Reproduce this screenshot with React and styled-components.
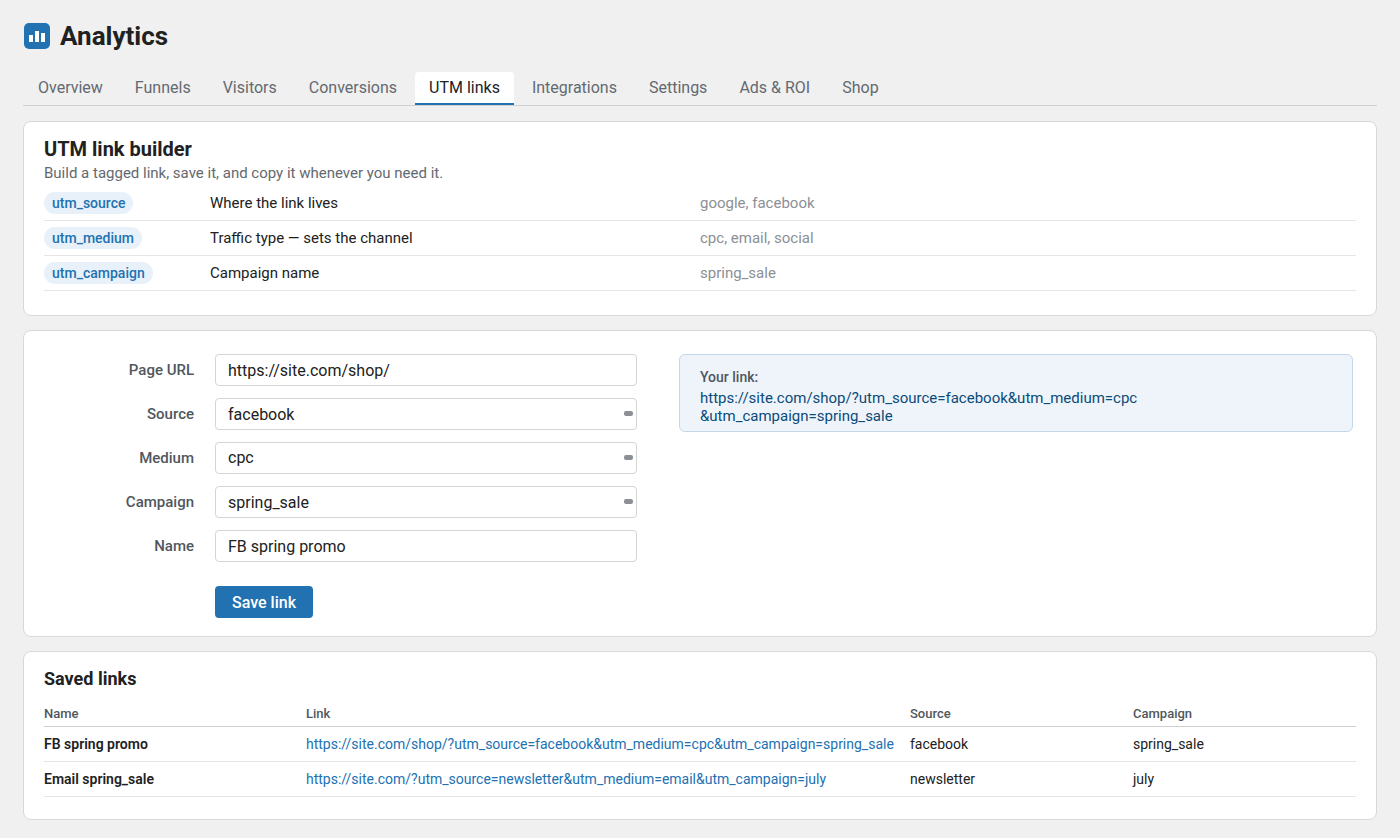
import React from "react";
import styled, { createGlobalStyle } from "styled-components";

const G = createGlobalStyle`
  body { margin:0; background:#f0f0f0; font-family: Roboto, "Liberation Sans", sans-serif; color:#212121; }
`;
const Page = styled.div`padding:20px 23px 24px 23px;`;
const Header = styled.div`display:flex;align-items:center;gap:10px;height:32px;margin-left:1px;`;
const Logo = styled.div`width:26px;height:26px;border-radius:5px;background:#2271b1;display:flex;align-items:flex-end;justify-content:center;gap:2px;padding-bottom:7px;box-sizing:border-box;`;
const Bar = styled.span`width:4px;height:${p=>p.h}px;background:#fff;`;
const H1 = styled.h1`margin:0;font-size:26px;font-weight:700;`;
const Tabs = styled.div`display:flex;margin-top:20px;border-bottom:1px solid #d0d0d0;padding-left:1px;`;
const Tab = styled.div`padding:0 14px;height:31px;line-height:31px;font-size:16px;margin-right:4px;color:${p=>p.a?"#1d2327":"#646970"};background:${p=>p.a?"#fff":"transparent"};border-bottom:${p=>p.a?"2px solid #2271b1":"2px solid transparent"};border-radius:4px 4px 0 0;`;
const Card = styled.div`background:#fff;border:1px solid #d8d8d8;border-radius:8px;margin-top:${p=>p.mt||14}px;padding:${p=>p.pad||"14px 20px 24px"};`;
const H2 = styled.h2`margin:0;font-size:20px;font-weight:700;line-height:26px;`;
const Sub = styled.div`font-size:15px;color:#646970;margin-top:2px;margin-bottom:4px;`;
const PRow = styled.div`display:grid;grid-template-columns:166px 490px 1fr;height:34px;align-items:center;border-bottom:1px solid #e5e5e5;font-size:15px;`;
const Chip = styled.span`justify-self:start;background:#e8f1fa;color:#2271b1;font-weight:500;font-size:14px;padding:3px 8px;border-radius:11px;`;
const Ex = styled.span`color:#8c8f94;`;
const FormWrap = styled.div`display:flex;gap:42px;`;
const Form = styled.div`display:flex;flex-direction:column;gap:12px;`;
const FRow = styled.div`display:flex;align-items:center;gap:21px;`;
const Label = styled.label`width:170px;text-align:right;font-size:15px;color:#50575e;font-weight:500;`;
const InputBox = styled.div`position:relative;width:422px;height:32px;border:1px solid #d5d5d5;border-radius:4px;box-sizing:border-box;display:flex;align-items:${p=>p.top?"flex-start":"center"};padding:${p=>p.top?"5px":"0"} 12px 0;font-size:16px;`;
const Dash = styled.span`position:absolute;right:3px;top:12px;width:9px;height:5px;border-radius:2px;background:#8c8f94;`;
const Btn = styled.button`margin:12px 0 0 191px;width:98px;height:32px;border:none;border-radius:4px;background:#2271b1;color:#fff;font-family:inherit;font-size:16px;font-weight:500;`;
const Result = styled.div`flex:1;height:78px;box-sizing:border-box;background:#eff4fb;border:1px solid #c3d6ea;border-radius:6px;padding:14px 20px;`;
const RLabel = styled.div`font-size:14px;color:#50575e;font-weight:500;margin-bottom:4px;`;
const RLink = styled.div`font-size:15px;color:#0a4b78;line-height:18px;`;
const Table = styled.div`margin-top:8px;`;
const TR = styled.div`display:grid;grid-template-columns:262px 604px 223px 1fr;height:${p=>p.h?26:34}px;align-items:center;border-bottom:1px solid ${p=>p.h?"#d0d0d0":"#e5e5e5"};font-size:${p=>p.h?13:15}px;color:${p=>p.h?"#50575e":"#212121"};font-weight:${p=>p.h?500:400};`;
const Bold = styled.span`font-weight:600;font-size:14px;`;
const TLink = styled.span`color:#2271b1;font-size:14px;white-space:nowrap;overflow:hidden;text-overflow:ellipsis;padding-right:4px;`;
const Cell = styled.span`font-size:14px;`;

const params=[["utm_source","Where the link lives","google, facebook"],["utm_medium","Traffic type — sets the channel","cpc, email, social"],["utm_campaign","Campaign name","spring_sale"]];
const fields=[["Page URL","https://site.com/shop/",0],["Source","facebook",1],["Medium","cpc",1,1],["Campaign","spring_sale",1],["Name","FB spring promo",0]];

export default function App(){
  return <><G/><Page>
    <Header><Logo><Bar h={7}/><Bar h={11}/><Bar h={9}/></Logo><H1>Analytics</H1></Header>
    <Tabs>{["Overview","Funnels","Visitors","Conversions","UTM links","Integrations","Settings","Ads & ROI","Shop"].map(t=><Tab key={t} a={t==="UTM links"}>{t}</Tab>)}</Tabs>
    <Card mt={15}>
      <H2>UTM link builder</H2>
      <Sub>Build a tagged link, save it, and copy it whenever you need it.</Sub>
      {params.map(p=><PRow key={p[0]}><Chip>{p[0]}</Chip><span>{p[1]}</span><Ex>{p[2]}</Ex></PRow>)}
    </Card>
    <Card pad="23px 23px 18px 0">
      <FormWrap>
        <Form>
          {fields.map(f=><FRow key={f[0]}><Label>{f[0]}</Label><InputBox top={f[3]}>{f[1]}{f[2]?<Dash/>:null}</InputBox></FRow>)}
          <Btn>Save link</Btn>
        </Form>
        <Result><RLabel>Your link:</RLabel><RLink>https://site.com/shop/?utm_source=facebook&amp;utm_medium=cpc<br/>&amp;utm_campaign=spring_sale</RLink></Result>
      </FormWrap>
    </Card>
    <Card pad="14px 20px 22px">
      <H2 style={{fontSize:18}}>Saved links</H2>
      <Table>
        <TR h><span>Name</span><span>Link</span><span>Source</span><span>Campaign</span></TR>
        <TR><Bold>FB spring promo</Bold><TLink>https://site.com/shop/?utm_source=facebook&amp;utm_medium=cpc&amp;utm_campaign=spring_sale</TLink><Cell>facebook</Cell><Cell>spring_sale</Cell></TR>
        <TR><Bold>Email spring_sale</Bold><TLink>https://site.com/?utm_source=newsletter&amp;utm_medium=email&amp;utm_campaign=july</TLink><Cell>newsletter</Cell><Cell>july</Cell></TR>
      </Table>
    </Card>
  </Page></>;
}
